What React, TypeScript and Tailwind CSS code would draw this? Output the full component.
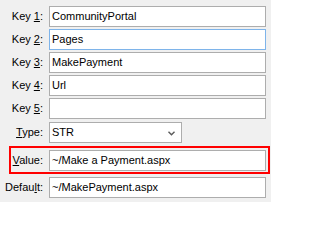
import type { ReactNode } from 'react'

function Label({ children, className = 'w-[43px]' }: { children: ReactNode; className?: string }) {
  return <div className={`${className} shrink-0 text-right leading-none whitespace-nowrap`}>{children}</div>
}

function Field({ value, focused }: { value: string; focused?: boolean }) {
  return (
    <div
      className={`w-[217px] h-[21px] bg-white border flex items-center pl-[2px] leading-none whitespace-nowrap overflow-hidden ${
        focused ? 'border-[#7eb4ea]' : 'border-[#adadad]'
      }`}
    >
      {value}
    </div>
  )
}

const keys = [
  { n: '1', v: 'CommunityPortal' },
  { n: '2', v: 'Pages', focused: true },
  { n: '3', v: 'MakePayment' },
  { n: '4', v: 'Url' },
  { n: '5', v: '' },
]

export default function App() {
  return (
    <div
      className="w-[271px] h-[202px] bg-[#f0f0f0] text-[11px] text-black pt-[6px] flex flex-col"
      style={{ fontFamily: '"Liberation Sans", Arial, sans-serif' }}
    >
      <div className="flex flex-col gap-[2px]">
        {keys.map((k) => (
          <div key={k.n} className="flex items-center gap-[6px]">
            <Label>
              Key <u className="underline-offset-1">{k.n}</u>:
            </Label>
            <Field value={k.v} focused={k.focused} />
          </div>
        ))}
      </div>

      <div className="flex items-center gap-[6px] mt-[3px]">
        <Label>
          <u className="underline-offset-1">T</u>ype:
        </Label>
        <div className="w-[133px] h-[21px] bg-white border border-[#adadad] flex items-center justify-between pl-[2px] pr-[6px] leading-none">
          <span>STR</span>
          <svg width="7" height="5" viewBox="0 0 7 5" className="mt-[1px]">
            <path d="M0.5 0.8 L3.5 3.8 L6.5 0.8" fill="none" stroke="#5a5a5a" strokeWidth="1.4" />
          </svg>
        </div>
      </div>

      {/* highlighted row */}
      <div className="ml-[9px] w-[261px] h-[28px] mt-[3px] border-2 border-[#ff0000] pt-[2px] flex items-start gap-[6px]">
        <Label className="w-[32px] h-[21px] flex items-center justify-end">
          <span>
            <u className="underline-offset-1">V</u>alue:
          </span>
        </Label>
        <Field value="~/Make a Payment.aspx" />
      </div>

      <div className="flex items-center gap-[6px] mt-[3px]">
        <Label>
          Defau<u className="underline-offset-1">l</u>t:
        </Label>
        <Field value="~/MakePayment.aspx" />
      </div>
    </div>
  )
}
